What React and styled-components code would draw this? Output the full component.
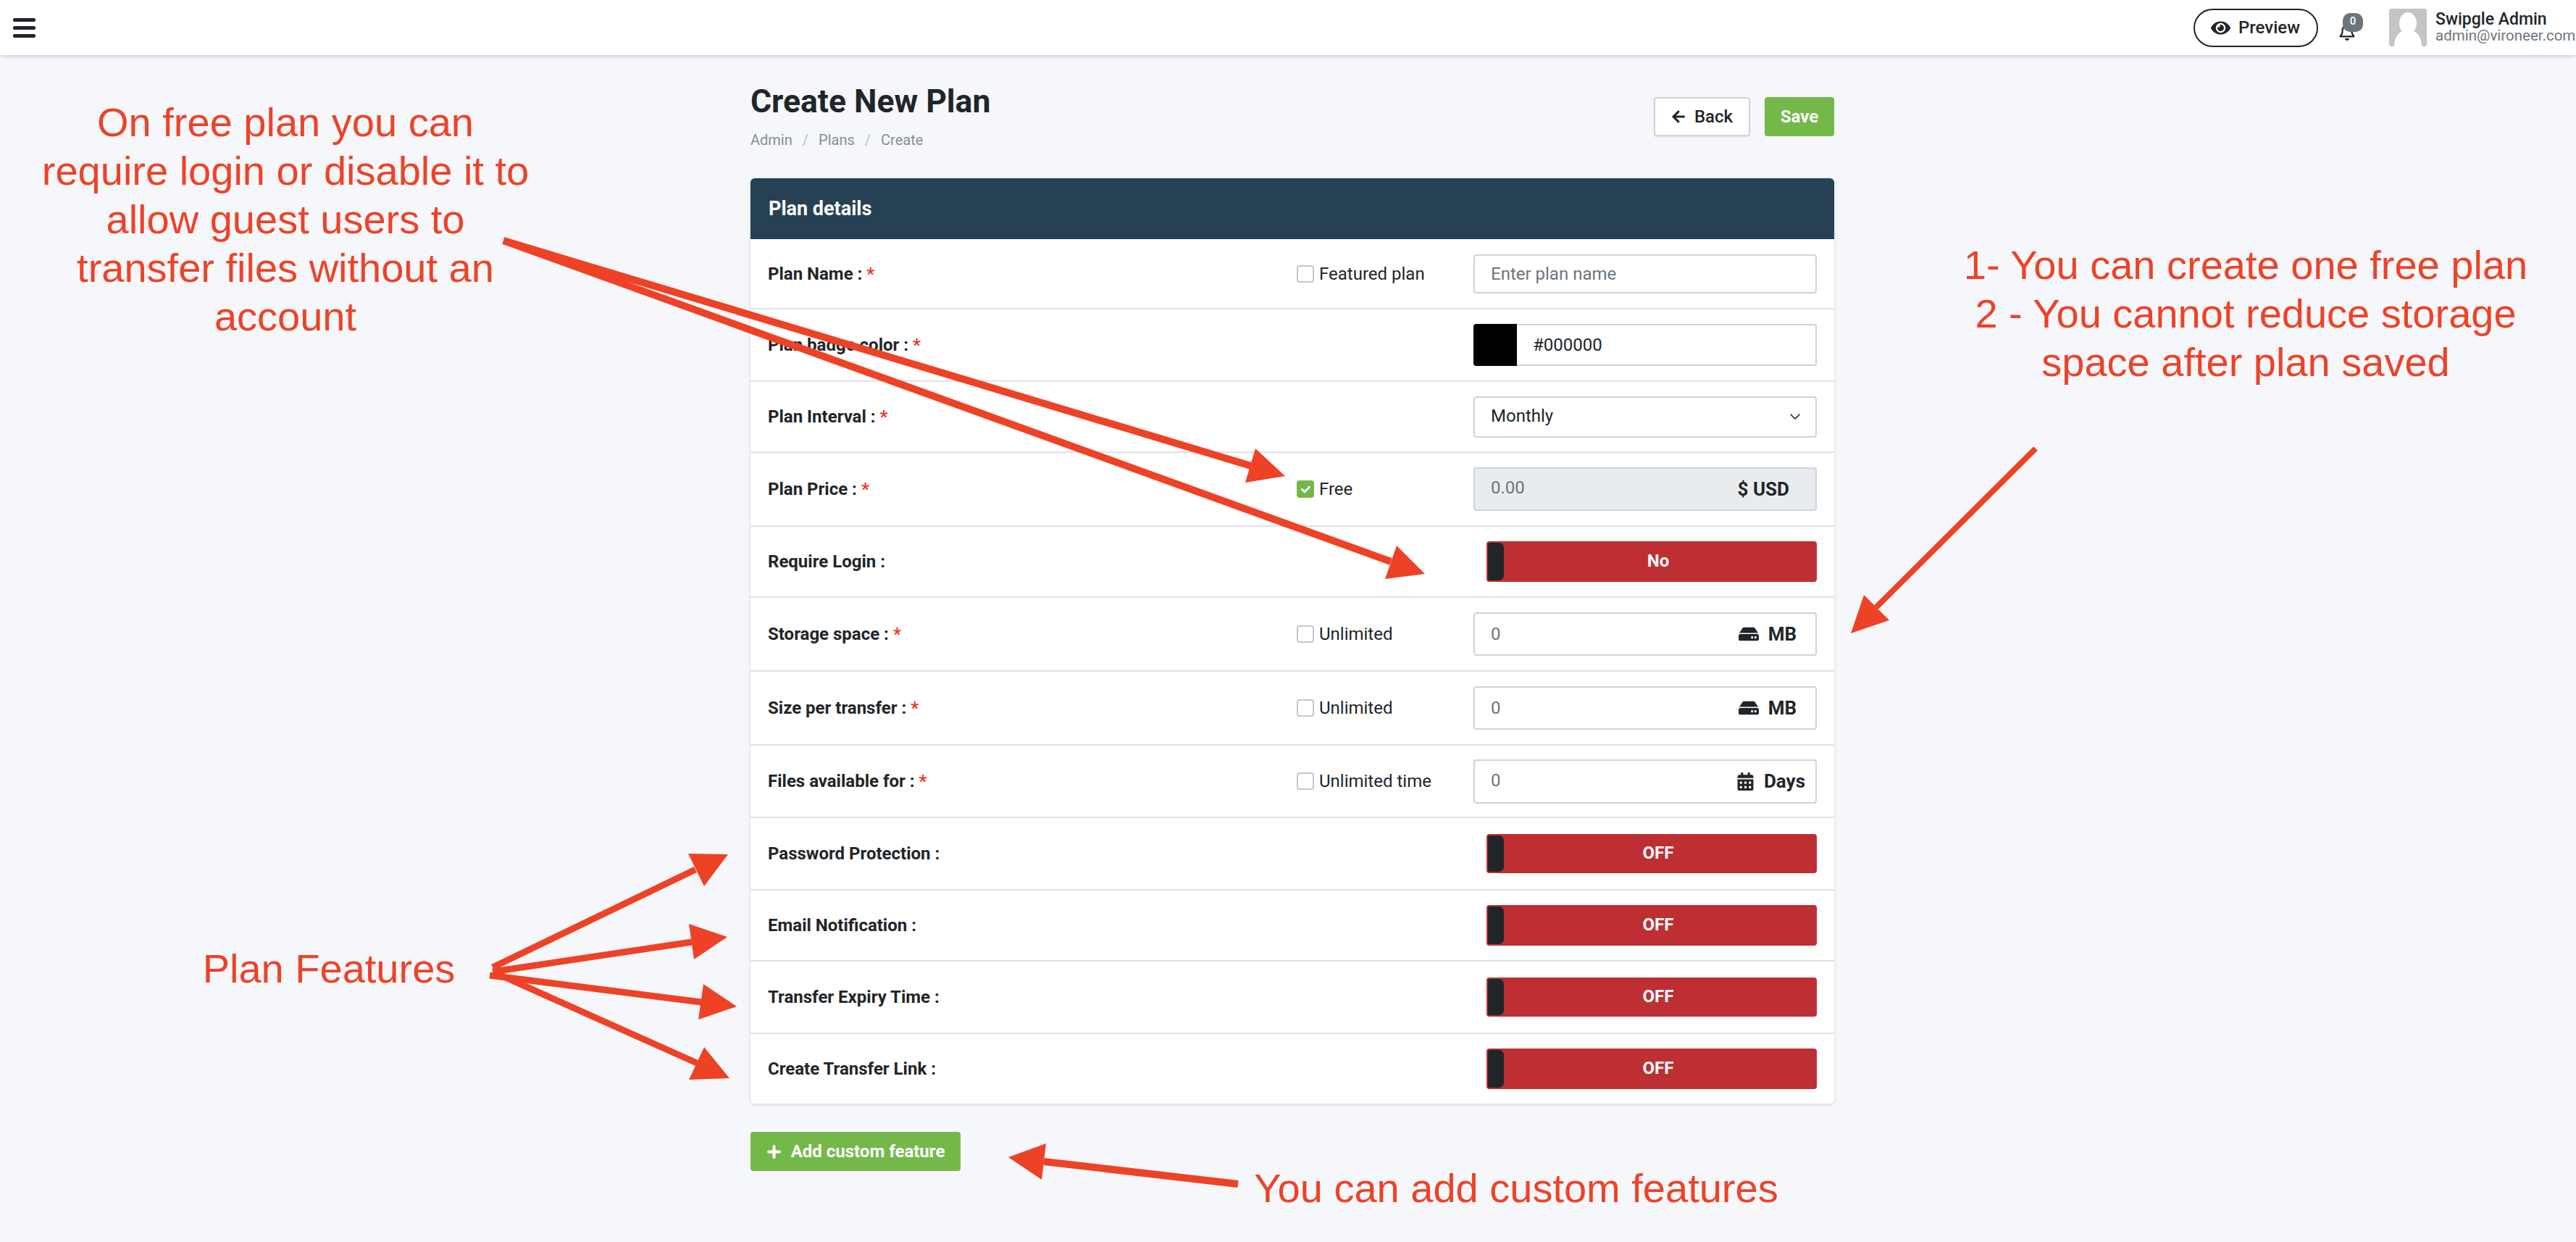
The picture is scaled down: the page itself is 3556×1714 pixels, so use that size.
import React from "react";
import styled, { createGlobalStyle } from "styled-components";
import { FaEye, FaRegBell, FaArrowLeft, FaPlus, FaHdd, FaCalendarAlt, FaCheck } from "react-icons/fa";
import { FiChevronDown } from "react-icons/fi";

const GlobalStyle = createGlobalStyle`
  html, body {
    margin: 0;
    padding: 0;
    background: #f5f7fb;
    overflow: hidden;
  }
  * {
    box-sizing: border-box;
  }
  body {
    font-family: Roboto, "Liberation Sans", sans-serif;
    color: #212529;
  }
`;

const Page = styled.div`
  position: relative;
  width: 3556px;
  height: 1714px;
  overflow: hidden;
`;

const Nav = styled.header`
  display: flex;
  align-items: center;
  height: 76px;
  padding-left: 18px;
  background: #fff;
  box-shadow: 0 1px 6px rgba(0, 0, 0, 0.22);
`;

const Burger = styled.div`
  display: flex;
  flex-direction: column;
  gap: 6px;
  width: 31px;

  span {
    height: 5px;
    border-radius: 2px;
    background: #212529;
  }
`;

const NavRight = styled.div`
  display: flex;
  align-items: center;
  margin-left: auto;
`;

const PreviewBtn = styled.div`
  display: flex;
  align-items: center;
  gap: 11px;
  width: 172px;
  height: 53px;
  padding-left: 22px;
  border: 2px solid #212529;
  border-radius: 27px;
  font-size: 24px;
  font-weight: 500;
`;

const BellWrap = styled.div`
  position: relative;
  width: 34px;
  height: 60px;
  margin-left: 28px;
  margin-right: 36px;

  svg {
    position: absolute;
    left: 0;
    top: 24px;
  }
`;

const Badge = styled.span`
  position: absolute;
  left: 6px;
  top: 10px;
  width: 28px;
  height: 26px;
  border-radius: 10px;
  background: #6c757d;
  color: #fff;
  font-size: 15px;
  font-weight: 500;
  line-height: 23px;
  text-align: center;
`;

const Avatar = styled.div`
  width: 52px;
  height: 52px;
  border-radius: 3px;
  background: #c4c4c4;
  overflow: hidden;

  svg {
    display: block;
  }
`;

const User = styled.div`
  width: 194px;
  margin-left: 12px;
  white-space: nowrap;
  line-height: 22px;
`;

const UserName = styled.div`
  font-size: 23px;
  font-weight: 500;
`;

const UserMail = styled.div`
  font-size: 20.5px;
  color: #6c757d;
`;

const Main = styled.main`
  width: 1496px;
  margin-left: 1036px;
`;

const Head = styled.div`
  display: flex;
  justify-content: space-between;
  height: 170px;
  padding-top: 39px;
`;

const Title = styled.h1`
  margin: 0;
  font-size: 44.5px;
  font-weight: 700;
  line-height: 50px;
`;

const Crumbs = styled.div`
  display: flex;
  gap: 14px;
  margin-top: 16px;
  font-size: 20px;
  line-height: 24px;
  color: #868e96;

  i {
    font-style: normal;
    color: #b9bfc5;
  }
`;

const Actions = styled.div`
  display: flex;
  gap: 20px;
  height: 54px;
  margin-top: 19px;
`;

const Btn = styled.div`
  display: flex;
  align-items: center;
  justify-content: center;
  gap: ${(p) => p.$gap || 12}px;
  width: ${(p) => p.$w}px;
  height: 54px;
  border-radius: 4px;
  font-size: 24px;
  font-weight: ${(p) => (p.$green ? 700 : 500)};
  background: ${(p) => (p.$green ? "#75b84a" : "#fff")};
  color: ${(p) => (p.$green ? "#fff" : "#212529")};
  border: ${(p) => (p.$green ? "none" : "2px solid #ced4da")};
  box-shadow: ${(p) => (p.$green ? "none" : "0 1px 2px rgba(0,0,0,.12)")};
`;

const Card = styled.section`
  border-radius: 6px;
  background: #fff;
  box-shadow: 0 1px 5px rgba(0, 0, 0, 0.14);
  overflow: hidden;
`;

const CardHead = styled.div`
  display: flex;
  align-items: center;
  height: 84px;
  padding-left: 25px;
  background: #274154;
  color: #fff;
  font-size: 27px;
  font-weight: 700;
`;

const Row = styled.div`
  display: flex;
  align-items: center;
  height: ${(p) => p.$h}px;
  padding: 0 24px;
  border-bottom: ${(p) => (p.$last ? "none" : "2px solid #dee2e6")};
`;

const Label = styled.div`
  flex: 1;
  font-size: 24px;
  font-weight: 700;
`;

const Star = styled.span`
  margin-left: 6px;
  color: #f0321f;
`;

const Option = styled.div`
  display: flex;
  align-items: center;
  gap: 7px;
  width: 244px;
  font-size: 24px;
`;

const Box = styled.span`
  display: flex;
  align-items: center;
  justify-content: center;
  width: 24px;
  height: 24px;
  border-radius: 4px;
  border: ${(p) => (p.$on ? "none" : "2px solid #c4c8cc")};
  background: ${(p) => (p.$on ? "#75b84a" : "#fff")};
  color: #fff;
`;

const Field = styled.div`
  display: flex;
  align-items: center;
  width: 474px;
  height: ${(p) => p.$h}px;
  padding: 0 ${(p) => p.$pr || 16}px 0 22px;
  border: 2px solid #ced4da;
  border-radius: 4px;
  font-size: 24px;
  background: ${(p) => (p.$off ? "#e9ecef" : "#fff")};
  color: ${(p) => (p.$dark ? "#212529" : "#6c757d")};
`;

const Val = styled.span`
  margin-bottom: ${(p) => p.$lift || 0}px;
`;

const Suffix = styled.span`
  display: flex;
  align-items: center;
  gap: 13px;
  margin-left: auto;
  color: #212529;
  font-size: 26px;
  font-weight: 700;
`;

const ColorField = styled.div`
  display: flex;
  align-items: center;
  width: 474px;
  height: 58px;
  border: 2px solid #ced4da;
  border-radius: 4px;
  font-size: 24px;
`;

const Swatch = styled.span`
  width: 60px;
  height: 58px;
  margin: -2px 22px -2px -2px;
  border-radius: 4px 0 0 4px;
  background: #000;
`;

const Toggle = styled.div`
  position: relative;
  display: flex;
  align-items: center;
  justify-content: center;
  width: 456px;
  height: ${(p) => p.$h}px;
  margin-left: auto;
  padding: 0 0 3px 18px;
  border-radius: 4px;
  background: #bd2f33;
  color: #fff;
  font-size: 24px;
  font-weight: 700;
`;

const Knob = styled.span`
  position: absolute;
  left: 2px;
  top: 2px;
  bottom: 2px;
  width: 22px;
  border-radius: 2px 7px 7px 2px;
  background: #212529;
`;

const AddBtn = styled(Btn)`
  margin-top: 39px;
`;

const Overlay = styled.svg`
  position: absolute;
  left: 0;
  top: 0;
  pointer-events: none;
`;

const Note = styled.div`
  position: absolute;
  left: ${(p) => p.$x - p.$w / 2}px;
  top: ${(p) => p.$y}px;
  width: ${(p) => p.$w}px;
  font-family: "Liberation Sans", Arial, sans-serif;
  font-size: 56px;
  line-height: 67px;
  text-align: center;
  color: #ee4227;
  white-space: pre-line;
`;

const arrowColor = "#ee4227";

const arrows = [
  { from: [695, 332], to: [1727, 643], w: 10, head: "1774,657 1733,619 1719,666" },
  { from: [695, 332], to: [1920, 775], w: 10, head: "1967,792 1928,753 1912,799" },
  { from: [2810, 619], to: [2590, 838], w: 8, head: "2555,874 2573,821 2608,856" },
  { from: [680, 1335], to: [960, 1200], w: 9, head: "1005,1179 950,1178 972,1223" },
  { from: [680, 1341], to: [955, 1300], w: 9, head: "1004,1293 951,1275 958,1324" },
  { from: [676, 1346], to: [968, 1383], w: 9, head: "1017,1389 971,1358 964,1407" },
  { from: [680, 1341], to: [962, 1467], w: 9, head: "1007,1488 972,1445 951,1490" },
  { from: [1709, 1634], to: [1441, 1603], w: 10, head: "1392,1597 1444,1578 1438,1628" },
];

const Check = ({ label, on }) => (
  <Option>
    <Box $on={on}>{on && <FaCheck size={13} />}</Box>
    {label}
  </Option>
);

const Req = () => <Star>*</Star>;

const Flags = [
  ["Password Protection :", 100, 54],
  ["Email Notification :", 98, 56],
  ["Transfer Expiry Time :", 100, 54],
  ["Create Transfer Link :", 96, 56],
];

export default function App() {
  return (
    <Page>
      <GlobalStyle />
      <Nav>
        <Burger>
          <span />
          <span />
          <span />
        </Burger>
        <NavRight>
          <PreviewBtn>
            <FaEye size={27} />
            Preview
          </PreviewBtn>
          <BellWrap>
            <FaRegBell size={24} />
            <Badge>0</Badge>
          </BellWrap>
          <Avatar>
            <svg width="52" height="52" viewBox="0 0 52 52">
              <ellipse cx="26" cy="20" rx="12" ry="15" fill="#fff" />
              <path d="M7 52c0-14 8-23 19-23s19 9 19 23z" fill="#fff" />
            </svg>
          </Avatar>
          <User>
            <UserName>Swipgle Admin</UserName>
            <UserMail>admin@vironeer.com</UserMail>
          </User>
        </NavRight>
      </Nav>

      <Main>
        <Head>
          <div>
            <Title>Create New Plan</Title>
            <Crumbs>
              <span>Admin</span>
              <i>/</i>
              <span>Plans</span>
              <i>/</i>
              <span>Create</span>
            </Crumbs>
          </div>
          <Actions>
            <Btn $w={133}>
              <FaArrowLeft size={20} />
              Back
            </Btn>
            <Btn $w={96} $green>
              Save
            </Btn>
          </Actions>
        </Head>

        <Card>
          <CardHead>Plan details</CardHead>
          <Row $h={97}>
            <Label>
              Plan Name :<Req />
            </Label>
            <Check label="Featured plan" />
            <Field $h={54}>Enter plan name</Field>
          </Row>
          <Row $h={100}>
            <Label>
              Plan badge color :<Req />
            </Label>
            <ColorField>
              <Swatch />
              #000000
            </ColorField>
          </Row>
          <Row $h={98}>
            <Label>
              Plan Interval :<Req />
            </Label>
            <Field $h={57} $dark>
              <Val $lift={3}>Monthly</Val>
              <Suffix>
                <FiChevronDown size={24} strokeWidth={1.6} />
              </Suffix>
            </Field>
          </Row>
          <Row $h={102}>
            <Label>
              Plan Price :<Req />
            </Label>
            <Check label="Free" on />
            <Field $h={60} $off $pr={36}>
              <Val $lift={5}>0.00</Val>
              <Suffix>$ USD</Suffix>
            </Field>
          </Row>
          <Row $h={98}>
            <Label>Require Login :</Label>
            <Toggle $h={56}>
              <Knob />
              No
            </Toggle>
          </Row>
          <Row $h={102}>
            <Label>
              Storage space :<Req />
            </Label>
            <Check label="Unlimited" />
            <Field $h={60} $pr={26}>
              <Val>0</Val>
              <Suffix>
                <FaHdd size={28} />
                MB
              </Suffix>
            </Field>
          </Row>
          <Row $h={102}>
            <Label>
              Size per transfer :<Req />
            </Label>
            <Check label="Unlimited" />
            <Field $h={60} $pr={26}>
              <Val>0</Val>
              <Suffix>
                <FaHdd size={28} />
                MB
              </Suffix>
            </Field>
          </Row>
          <Row $h={100}>
            <Label>
              Files available for :<Req />
            </Label>
            <Check label="Unlimited time" />
            <Field $h={61} $pr={14}>
              <Val $lift={2}>0</Val>
              <Suffix>
                <FaCalendarAlt size={25} />
                Days
              </Suffix>
            </Field>
          </Row>
          {Flags.map(([name, h, th], i) => (
            <Row key={name} $h={h} $last={i === Flags.length - 1}>
              <Label>{name}</Label>
              <Toggle $h={th}>
                <Knob />
                OFF
              </Toggle>
            </Row>
          ))}
        </Card>

        <AddBtn $w={290} $green $gap={13}>
          <FaPlus size={21} />
          Add custom feature
        </AddBtn>
      </Main>

      <Overlay width="3556" height="1714" viewBox="0 0 3556 1714">
        {arrows.map((a, i) => (
          <g key={i} fill={arrowColor}>
            <line x1={a.from[0]} y1={a.from[1]} x2={a.to[0]} y2={a.to[1]} stroke={arrowColor} strokeWidth={a.w} />
            <polygon points={a.head} />
          </g>
        ))}
      </Overlay>

      <Note $x={394} $y={135} $w={760}>
        {"On free plan you can\nrequire login or disable it to\nallow guest users to\ntransfer files without an\naccount"}
      </Note>
      <Note $x={3100} $y={332} $w={900}>
        {"1- You can create one free plan\n2 - You cannot reduce storage\nspace after plan saved"}
      </Note>
      <Note $x={454} $y={1303} $w={500}>
        Plan Features
      </Note>
      <Note $x={2093} $y={1606} $w={900}>
        You can add custom features
      </Note>
    </Page>
  );
}
